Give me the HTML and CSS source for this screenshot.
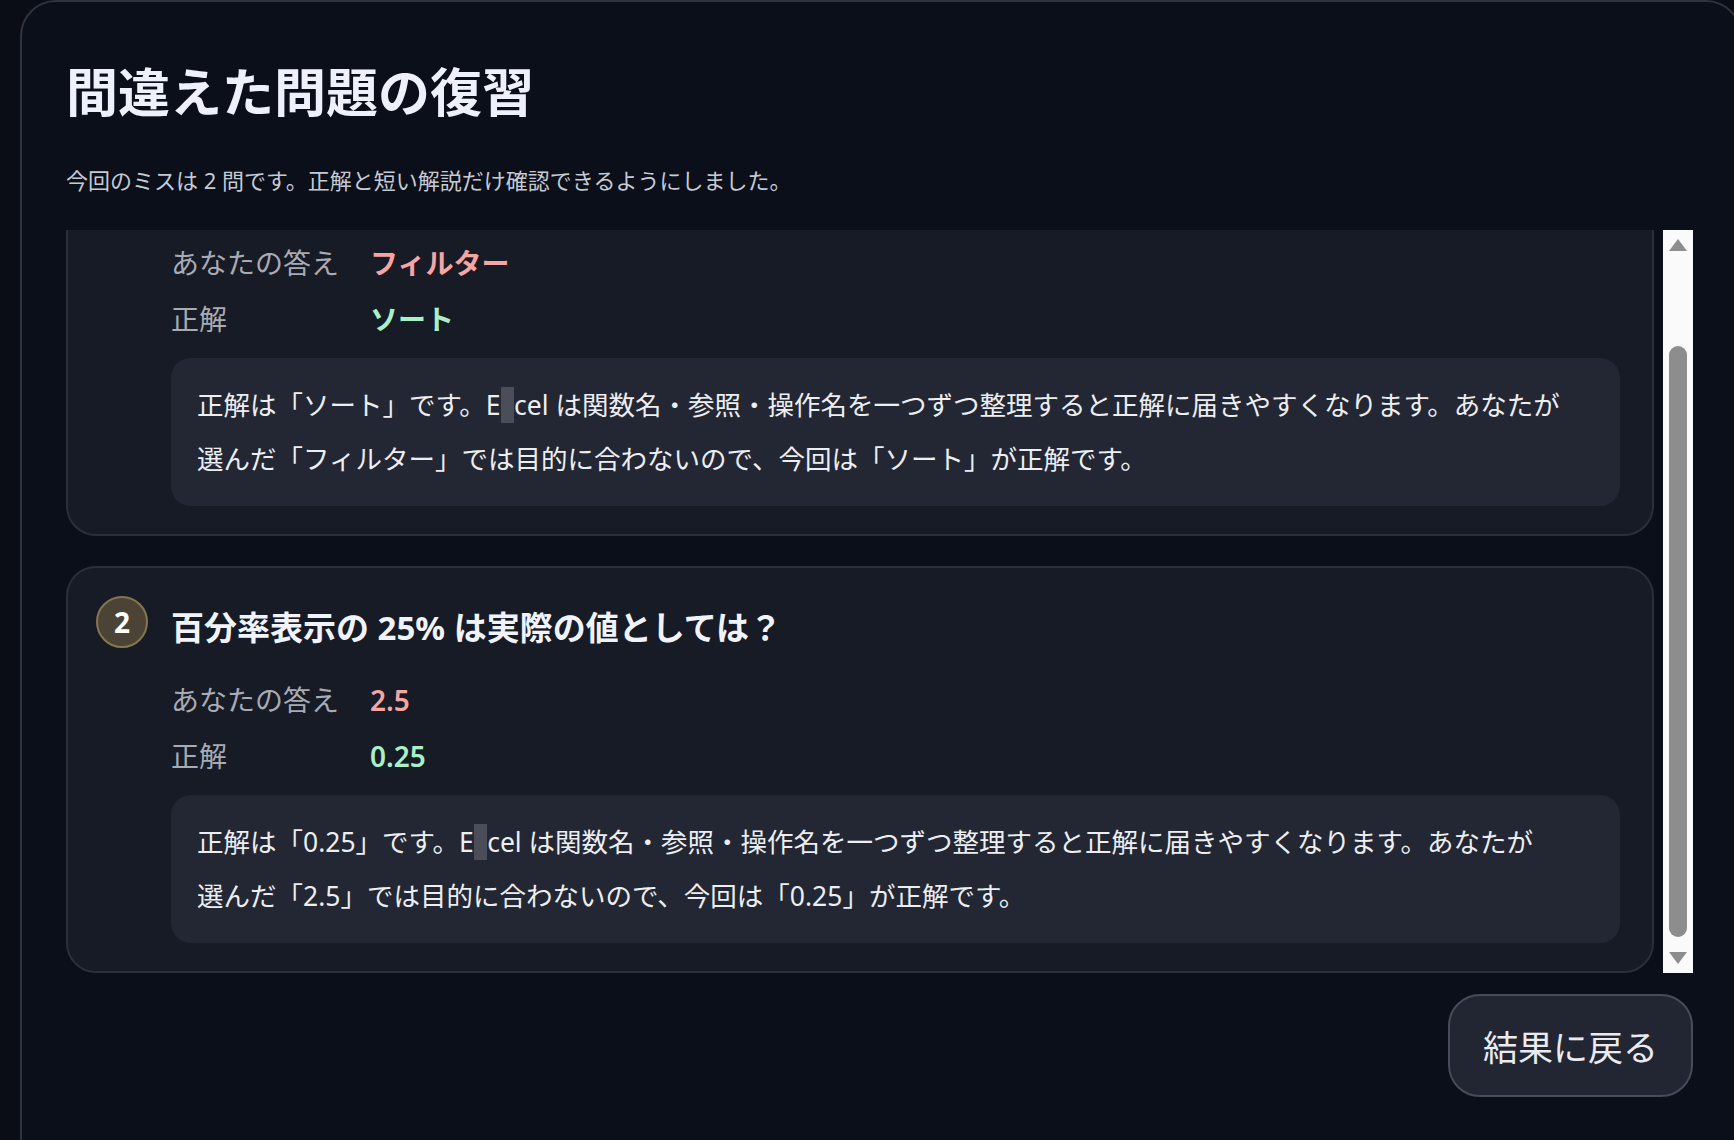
FILE: index.html
```html
<!DOCTYPE html>
<html lang="ja">
<head>
  <meta charset="utf-8">
  <title>間違えた問題の復習</title>
<link rel="stylesheet" href="styles.css"></head>
<body>

  <div class="panel">
    <h1 class="title">間違えた問題の復習</h1>
    <p class="lead">今回のミスは 2 問です。正解と短い解説だけ確認できるようにしました。</p>

    <div class="review-area">
      <div class="review-list" id="reviewList">
        <div class="review-card">
          <div class="badge">1</div>
          <div class="review-body">
            <h2 class="question">表のデータを指定した順番に並べ替える操作は？</h2>
            <dl class="answers">
              <dt>あなたの答え</dt>
              <dd class="wrong">フィルター</dd>
              <dt>正解</dt>
              <dd class="right">ソート</dd>
            </dl>
            <p class="explain">正解は「ソート」です。E<span class="caret">x</span>cel は関数名・参照・操作名を一つずつ整理すると正解に届きやすくなります。あなたが<br>選んだ「フィルター」では目的に合わないので、今回は「ソート」が正解です。</p>
          </div>
        </div>

        <div class="review-card">
          <div class="badge">2</div>
          <div class="review-body">
            <h2 class="question">百分率表示の 25% は実際の値としては？</h2>
            <dl class="answers">
              <dt>あなたの答え</dt>
              <dd class="wrong">2.5</dd>
              <dt>正解</dt>
              <dd class="right">0.25</dd>
            </dl>
            <p class="explain">正解は「0.25」です。E<span class="caret">x</span>cel は関数名・参照・操作名を一つずつ整理すると正解に届きやすくなります。あなたが<br>選んだ「2.5」では目的に合わないので、今回は「0.25」が正解です。</p>
          </div>
        </div>
      </div>

      <!-- スクロールバー（自前で描画） -->
      <div class="scrollbar">
        <div class="scroll-arrow up"></div>
        <div class="scroll-track" id="scrollTrack">
          <div class="scroll-thumb" id="scrollThumb"></div>
        </div>
        <div class="scroll-arrow down"></div>
      </div>
    </div>

    <div class="actions">
      <button class="back-button">結果に戻る</button>
    </div>
  </div>

  <script>
    let list = document.getElementById('reviewList');
    let track = document.getElementById('scrollTrack');
    let thumb = document.getElementById('scrollThumb');

    // つまみの長さと位置をリストのスクロール量に合わせる
    function updateThumb() {
      let room = track.clientHeight - 12;
      let size = room * list.clientHeight / list.scrollHeight;
      let maxScroll = list.scrollHeight - list.clientHeight;
      let offset = maxScroll > 0 ? (room - size) * list.scrollTop / maxScroll : 0;
      thumb.style.height = size + 'px';
      thumb.style.marginTop = (6 + offset) + 'px';
    }

    list.addEventListener('scroll', updateThumb);

    // 最後のカードが見えるように一番下までスクロールしておく
    list.scrollTop = list.scrollHeight;
    updateThumb();
  </script>

</body>
</html>
```

FILE: styles.css
```css
body {
  margin: 0;
  height: 100vh;
  overflow: hidden;
  background-color: #0a0d16;
  font-family: "Noto Sans", "Noto Sans CJK JP", sans-serif;
  color: #eceef3;
}

.panel {
  box-sizing: border-box;
  width: 1722px;
  min-height: 1200px;
  margin-left: 20px;
  padding: 59px 47px 0 44px;
  background-color: #0b0f1a;
  border: 2px solid #2f333d;
  border-radius: 36px;
}

.title {
  margin: 0;
  font-size: 52px;
  line-height: 62px;
  font-weight: 700;
  color: #eef1fb;
}

.lead {
  margin: 40px 0 0;
  font-size: 22px;
  line-height: 34px;
  color: #c6cad3;
}

.review-area {
  display: flex;
  gap: 9px;
  height: 743px;
  margin-top: 33px;
}

/* スクロールする問題リスト */
.review-list {
  flex: 1;
  overflow-y: auto;
  scrollbar-width: none;
  display: flex;
  flex-direction: column;
  gap: 30px;
}

.review-list::-webkit-scrollbar {
  display: none;
}

.scrollbar {
  width: 30px;
  display: flex;
  flex-direction: column;
  background-color: #fafafa;
}

.scroll-arrow {
  height: 30px;
  display: flex;
  justify-content: center;
  align-items: center;
}

.scroll-arrow::before {
  content: "";
  width: 0;
  height: 0;
  border-left: 9px solid transparent;
  border-right: 9px solid transparent;
}

.scroll-arrow.up::before {
  border-bottom: 12px solid #8d8d8d;
}

.scroll-arrow.down::before {
  border-top: 12px solid #8d8d8d;
}

.scroll-track {
  flex: 1;
  padding: 0 6px;
}

.scroll-thumb {
  height: 590px;
  background-color: #8d8d8d;
  border-radius: 9px;
}

.review-card {
  flex-shrink: 0;
  display: grid;
  grid-template-columns: 52px 1fr;
  column-gap: 23px;
  padding: 28px 32px 28px 28px;
  background-color: #171b26;
  border: 2px solid #2b2f3a;
  border-radius: 30px;
}

.badge {
  box-sizing: border-box;
  width: 52px;
  height: 52px;
  border-radius: 50%;
  background-color: #4a4336;
  border: 2px solid #85764f;
  display: flex;
  justify-content: center;
  align-items: center;
  font-size: 28px;
  font-weight: 700;
  color: #ffffff;
}

.question {
  margin: 0;
  font-size: 33px;
  line-height: 64px;
  font-weight: 700;
  color: #f1f3fa;
}

.answers {
  display: grid;
  grid-template-columns: 176px 1fr;
  column-gap: 23px;
  row-gap: 14px;
  margin: 19px 0 0;
  font-size: 28px;
  line-height: 42px;
}

.answers dt {
  color: #a7abb4;
}

.answers dd {
  margin: 0;
  font-weight: 600;
}

.wrong {
  color: #f6a5a5;
}

.right {
  color: #a9f0c8;
}

.explain {
  margin: 18px 0 0;
  padding: 20px 26px;
  background-color: #232733;
  border-radius: 20px;
  font-size: 26.5px;
  line-height: 54px;
  color: #eceef2;
}

.caret {
  background-color: #4b4e58;
  color: transparent;
}

.actions {
  display: flex;
  justify-content: flex-end;
  margin-top: 21px;
}

.back-button {
  height: 103px;
  padding: 0 33px;
  font-family: inherit;
  font-size: 35px;
  color: #e9ebf1;
  background-color: #222632;
  border: 2px solid #474c58;
  border-radius: 32px;
  cursor: pointer;
}
```
